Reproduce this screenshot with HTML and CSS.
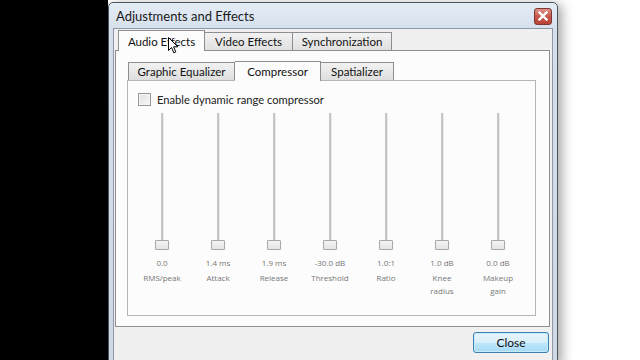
FILE: index.html
```html
<!DOCTYPE html>
<html>
<head>
<meta charset="utf-8">
<link rel="stylesheet" href="styles.css">
</head>
<body>
<div class="desk-left"></div>
<div class="window">
  <div class="titlebar">
    <span class="title">Adjustments and Effects</span>
    <div class="close-x">
      <svg width="10" height="10" viewBox="0 0 10 10"><path d="M1.5 1.5 L8.5 8.5 M8.5 1.5 L1.5 8.5" stroke="#fff" stroke-width="2.4" stroke-linecap="square"/></svg>
    </div>
  </div>
  <div class="client">
    <div class="tabs">
      <div class="tab tab-audio active">Audio Effects</div>
      <div class="tab tab-video">Video Effects</div>
      <div class="tab tab-sync">Synchronization</div>
    </div>
    <div class="pane">
      <div class="subtabs">
        <div class="subtab sub-eq">Graphic Equalizer</div>
        <div class="subtab sub-comp active">Compressor</div>
        <div class="subtab sub-spat">Spatializer</div>
      </div>
      <div class="subpane">
        <label class="check"><span class="box"></span>Enable dynamic range compressor</label>
        <div class="sliders">
          <div class="slider"><div class="track"></div><div class="handle"></div><div class="val">0.0</div><div class="name">RMS/peak</div></div>
          <div class="slider"><div class="track"></div><div class="handle"></div><div class="val">1.4 ms</div><div class="name">Attack</div></div>
          <div class="slider"><div class="track"></div><div class="handle"></div><div class="val">1.9 ms</div><div class="name">Release</div></div>
          <div class="slider"><div class="track"></div><div class="handle"></div><div class="val">-30.0 dB</div><div class="name">Threshold</div></div>
          <div class="slider"><div class="track"></div><div class="handle"></div><div class="val">1.0:1</div><div class="name">Ratio</div></div>
          <div class="slider"><div class="track"></div><div class="handle"></div><div class="val">1.0 dB</div><div class="name">Knee<br>radius</div></div>
          <div class="slider"><div class="track"></div><div class="handle"></div><div class="val">0.0 dB</div><div class="name">Makeup<br>gain</div></div>
        </div>
      </div>
    </div>
    <div class="footer">
      <button class="btn">Close</button>
    </div>
  </div>
</div>
<div class="desk-right"></div>
<svg class="cursor" width="12" height="18" viewBox="0 0 12 18"><path d="M0.5 0.5 L0.5 13.5 L3.5 10.5 L5.8 15.8 L7.8 14.9 L5.6 9.8 L9.8 9.8 Z" fill="#fff" stroke="#000" stroke-width="1"/></svg>
</body>
</html>
```
FILE: styles.css
```css
* { box-sizing: border-box; }
html, body { margin: 0; padding: 0; }
body {
  width: 640px;
  height: 360px;
  overflow: hidden;
  background: #fff;
  display: flex;
  position: relative;
  font-family: Lato, "Open Sans", sans-serif;
}
.desk-left { width: 108px; height: 360px; background: #000; flex: none; }
.desk-right { flex: 1; }
.window {
  flex: none;
  width: 450px;
  height: 362px;
  margin-top: 2px;
  border: 1px solid #4d5560;
  border-radius: 5px 5px 0 0;
  background: linear-gradient(#e4ecf6, #d4dfeb 30px, #cfd9e4);
  box-shadow: 4px 2px 12px rgba(0,0,0,0.35);
  padding: 0 4px;
  display: flex;
  flex-direction: column;
}
.titlebar {
  height: 25px;
  display: flex;
  align-items: center;
  justify-content: space-between;
  padding-left: 3px;
  padding-right: 1px;
}
.title { font-size: 13px; color: #1a1a1a; }
.close-x {
  width: 18px; height: 17px;
  margin-top: 1px;
  border: 1px solid #7a3a33;
  border-radius: 3px;
  background: linear-gradient(#e0928a, #c8574c 50%, #b84234);
  display: flex; align-items: center; justify-content: center;
}
.client {
  flex: 1;
  background: #f0f0f0;
  border: 1px solid #8d99a6;
  border-bottom: none;
  display: flex;
  flex-direction: column;
  padding: 0 2px 0 1px;
}
.tabs { display: flex; height: 20px; padding-left: 3px; margin-top: 1px; align-items: flex-end; position: relative; z-index: 1; }
.tab {
  font-size: 11.5px;
  color: #111;
  height: 18px;
  border: 1px solid #8c8e94;
  border-bottom: none;
  background: linear-gradient(#f2f2f2, #e0e0e0);
  display: flex; align-items: center; justify-content: center;
}
.tab + .tab { border-left: none; }
.tab.active {
  height: 21px;
  margin-bottom: -1px;
  background: #fcfcfc;
}
.tab-audio { width: 87px; }
.tab-video { width: 88px; }
.tab-sync { width: 99px; }
.pane {
  height: 277px;
  background: #fcfcfc;
  border: 1px solid #8c8e94;
  padding: 10px 13px 0 11px;
  display: flex;
  flex-direction: column;
}
.subtabs { display: flex; height: 19px; align-items: flex-end; padding-left: 1px; position: relative; z-index: 1; }
.subtab {
  font-size: 11.5px;
  color: #111;
  height: 18px;
  border: 1px solid #8c8e94;
  border-bottom: none;
  background: linear-gradient(#f2f2f2, #dedede);
  display: flex; align-items: center; justify-content: center;
}
.subtab + .subtab { border-left: none; }
.subtab.active {
  height: 20px;
  margin-bottom: -1px;
  background: #fcfcfc;
}
.sub-eq { width: 107px; }
.sub-comp { width: 86px; }
.sub-spat { width: 73px; }
.subpane {
  height: 236px;
  border: 1px solid #b4b4b4;
  background: #fcfcfc;
  padding: 12px 0 0 10px;
}
.check { display: flex; align-items: center; font-size: 11.2px; color: #222; height: 13px; }
.box {
  width: 13px; height: 13px;
  border: 1px solid #999;
  background: linear-gradient(135deg, #e0e0e0, #f8f8f8);
  margin-right: 6px;
  box-shadow: inset 0 0 0 1px #f4f4f4;
}
.sliders { display: grid; grid-template-columns: repeat(7, 56px); margin-left: -4px; margin-top: 7px; }
.slider { display: flex; flex-direction: column; align-items: center; }
.track { width: 2px; height: 127px; background: #c6c6c6; border-right: 1px solid #e8e8e8; box-sizing: content-box; }
.handle {
  width: 14px; height: 10px;
  border: 1px solid #a8a8a8;
  border-radius: 1px;
  background: linear-gradient(#f4f4f4, #e4e4e4);
}
.val { font-size: 8px; color: #777; margin-top: 8px; line-height: 10px; font-family: "Open Sans", sans-serif; }
.name { font-size: 8px; color: #777; margin-top: 3px; line-height: 13px; text-align: center; font-family: "Open Sans", sans-serif; }
.footer { flex: 1; display: flex; justify-content: flex-end; align-items: flex-start; padding-top: 5px; padding-right: 1px; }
.btn {
  width: 76px; height: 21px;
  font-family: Lato, "Open Sans", sans-serif;
  font-size: 12px;
  color: #111;
  border: 1px solid #3c7fb1;
  border-radius: 3px;
  background: linear-gradient(#e8f5fc, #d8eefb 50%, #bee6fd 51%, #a7d9f5);
  box-shadow: inset 0 0 0 1px #c5ecfb;
  padding: 0;
}
.cursor { position: absolute; left: 168px; top: 37px; z-index: 10; }
```
